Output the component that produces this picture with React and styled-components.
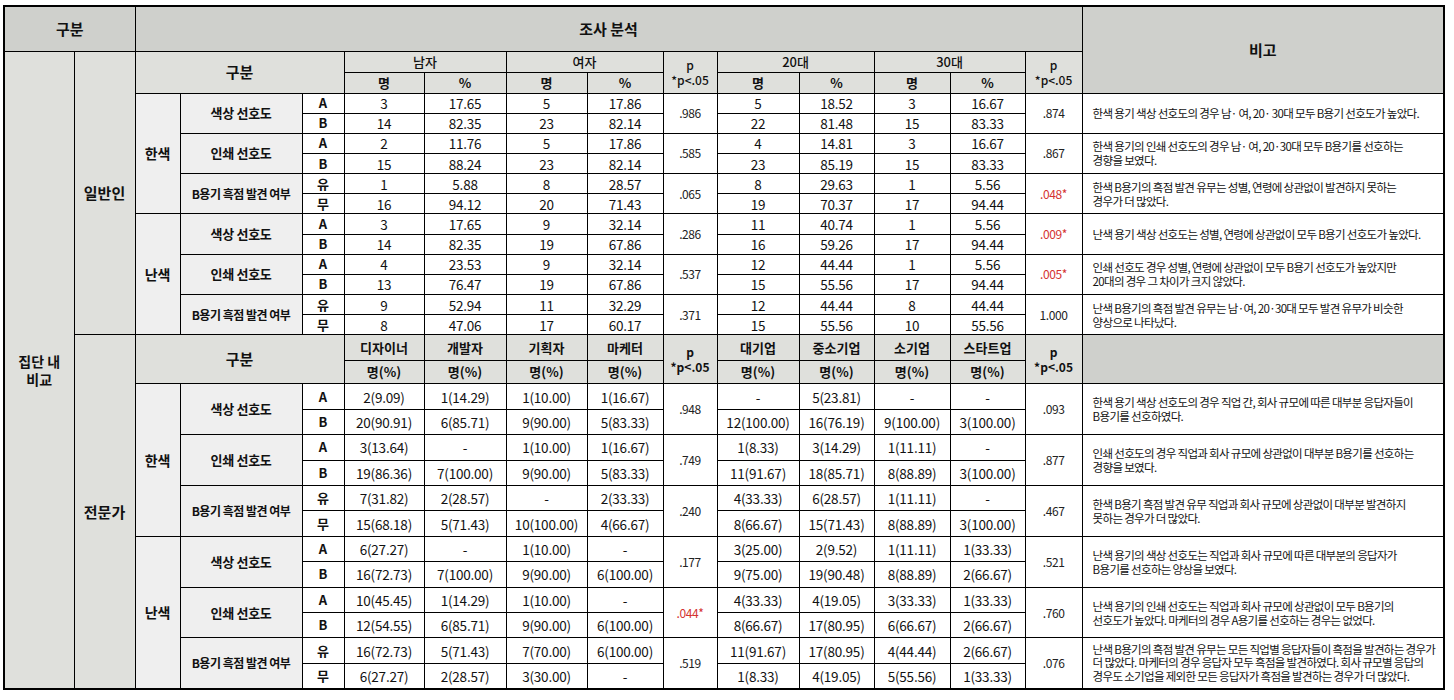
import React from "react";
import styled, { createGlobalStyle } from "styled-components";

const GlobalStyle = createGlobalStyle`
  html, body { margin: 0; padding: 0; background: #ffffff; }
  body { font-family: "Noto Sans CJK KR", "Noto Sans", sans-serif; color: #111; }
`;

const Page = styled.div`
  padding: 5px 0 0 3px;
`;

const Table = styled.table`
  border-collapse: collapse;
  table-layout: fixed;
  width: 1440px;
  border: 2px solid #000;
  font-family: "Noto Sans CJK KR", "Noto Sans", sans-serif;
`;

const baseCell = `
  border: 1px solid #000;
  padding: 0;
  text-align: center;
  vertical-align: middle;
  overflow: hidden;
  white-space: nowrap;
  color: #111;
  line-height: 16px;
`;

const HeadCell = styled.td`
  ${baseCell}
  background: #cfd0cc;
  font-weight: 700;
  font-size: 15px;
`;

const SubHead = styled.td`
  ${baseCell}
  background: #dfe0dc;
  font-weight: ${(p) => (p.$light ? 500 : 700)};
  font-size: ${(p) => p.$size || 13}px;
  line-height: ${(p) => p.$lh || "16px"};
`;

const SideCell = styled.td`
  ${baseCell}
  background: #dfe0dc;
  font-weight: 700;
  font-size: ${(p) => p.$size || 14}px;
  line-height: 18px;
`;

const GroupCell = styled.td`
  ${baseCell}
  background: #efefef;
  font-weight: 700;
  font-size: 14px;
`;

const LabelCell = styled.td`
  ${baseCell}
  background: #efefef;
  font-weight: 700;
  font-size: ${(p) => (p.$long ? 12 : 13)}px;
  letter-spacing: ${(p) => (p.$long ? "-0.5px" : "-0.3px")};
`;

const KeyCell = styled.td`
  ${baseCell}
  background: #fff;
  font-weight: 700;
  font-size: 13px;
`;

const DataCell = styled.td`
  ${baseCell}
  background: #fff;
  font-size: 13.5px;
  font-weight: 400;
  letter-spacing: -0.2px;
`;

const PCell = styled.td`
  ${baseCell}
  background: #fff;
  font-size: 12px;
  letter-spacing: -0.4px;
  color: ${(p) => (p.$sig ? "#d4322f" : "#222")};
`;

const NoteCell = styled.td`
  ${baseCell}
  background: #fff;
  text-align: left;
  padding: 0 6px 0 10px;
  font-size: 11.5px;
  line-height: ${(p) => (p.$tight ? 13.5 : 14)}px;
  letter-spacing: -0.68px;
`;

const HeadRow = styled.tr`
  height: ${(p) => p.$h}px;
`;

const DataRow = styled.tr`
  height: ${(p) => p.$h}px;
`;

const colWidths = [70, 61, 45, 122, 42, 80, 82, 81, 76, 54, 82, 75, 76, 75, 57, 362];

const general = [
  {
    group: "한색",
    items: [
      {
        label: "색상 선호도",
        keys: ["A", "B"],
        rows: [
          ["3", "17.65", "5", "17.86", "5", "18.52", "3", "16.67"],
          ["14", "82.35", "23", "82.14", "22", "81.48", "15", "83.33"],
        ],
        p1: ".986",
        p2: ".874",
        note: ["한색 용기 색상 선호도의 경우 남· 여, 20· 30대 모두 B용기 선호도가 높았다."],
      },
      {
        label: "인쇄 선호도",
        keys: ["A", "B"],
        rows: [
          ["2", "11.76", "5", "17.86", "4", "14.81", "3", "16.67"],
          ["15", "88.24", "23", "82.14", "23", "85.19", "15", "83.33"],
        ],
        p1: ".585",
        p2: ".867",
        note: ["한색 용기의 인쇄 선호도의 경우 남· 여, 20·30대 모두 B용기를 선호하는", "경향을 보였다."],
      },
      {
        label: "B용기 흑점 발견 여부",
        long: true,
        keys: ["유", "무"],
        rows: [
          ["1", "5.88", "8", "28.57", "8", "29.63", "1", "5.56"],
          ["16", "94.12", "20", "71.43", "19", "70.37", "17", "94.44"],
        ],
        p1: ".065",
        p2: ".048*",
        p2Sig: true,
        note: ["한색 B용기의 흑점 발견 유무는 성별, 연령에 상관없이 발견하지 못하는", "경우가 더 많았다."],
      },
    ],
  },
  {
    group: "난색",
    items: [
      {
        label: "색상 선호도",
        keys: ["A", "B"],
        rows: [
          ["3", "17.65", "9", "32.14", "11", "40.74", "1", "5.56"],
          ["14", "82.35", "19", "67.86", "16", "59.26", "17", "94.44"],
        ],
        p1: ".286",
        p2: ".009*",
        p2Sig: true,
        note: ["난색 용기 색상 선호도는 성별, 연령에 상관없이 모두 B용기 선호도가 높았다."],
      },
      {
        label: "인쇄 선호도",
        keys: ["A", "B"],
        rows: [
          ["4", "23.53", "9", "32.14", "12", "44.44", "1", "5.56"],
          ["13", "76.47", "19", "67.86", "15", "55.56", "17", "94.44"],
        ],
        p1: ".537",
        p2: ".005*",
        p2Sig: true,
        note: ["인쇄 선호도 경우 성별, 연령에 상관없이 모두 B용기 선호도가 높았지만", "20대의 경우 그 차이가 크지 않았다."],
      },
      {
        label: "B용기 흑점 발견 여부",
        long: true,
        keys: ["유", "무"],
        rows: [
          ["9", "52.94", "11", "32.29", "12", "44.44", "8", "44.44"],
          ["8", "47.06", "17", "60.17", "15", "55.56", "10", "55.56"],
        ],
        p1: ".371",
        p2: "1.000",
        note: ["난색 B용기의 흑점 발견 유무는 남·여, 20·30대 모두 발견 유무가 비슷한", "양상으로 나타났다."],
      },
    ],
  },
];

const expert = [
  {
    group: "한색",
    items: [
      {
        label: "색상 선호도",
        keys: ["A", "B"],
        rows: [
          ["2(9.09)", "1(14.29)", "1(10.00)", "1(16.67)", "-", "5(23.81)", "-", "-"],
          ["20(90.91)", "6(85.71)", "9(90.00)", "5(83.33)", "12(100.00)", "16(76.19)", "9(100.00)", "3(100.00)"],
        ],
        p1: ".948",
        p2: ".093",
        note: ["한색 용기 색상 선호도의 경우 직업 간, 회사 규모에 따른 대부분 응답자들이", "B용기를 선호하였다."],
      },
      {
        label: "인쇄 선호도",
        keys: ["A", "B"],
        rows: [
          ["3(13.64)", "-", "1(10.00)", "1(16.67)", "1(8.33)", "3(14.29)", "1(11.11)", "-"],
          ["19(86.36)", "7(100.00)", "9(90.00)", "5(83.33)", "11(91.67)", "18(85.71)", "8(88.89)", "3(100.00)"],
        ],
        p1: ".749",
        p2: ".877",
        note: ["인쇄 선호도의 경우 직업과 회사 규모에 상관없이 대부분 B용기를 선호하는", "경향을 보였다."],
      },
      {
        label: "B용기 흑점 발견 여부",
        long: true,
        keys: ["유", "무"],
        rows: [
          ["7(31.82)", "2(28.57)", "-", "2(33.33)", "4(33.33)", "6(28.57)", "1(11.11)", "-"],
          ["15(68.18)", "5(71.43)", "10(100.00)", "4(66.67)", "8(66.67)", "15(71.43)", "8(88.89)", "3(100.00)"],
        ],
        p1: ".240",
        p2: ".467",
        note: ["한색 B용기 흑점 발견 유무 직업과 회사 규모에 상관없이 대부분 발견하지", "못하는 경우가 더 많았다."],
      },
    ],
  },
  {
    group: "난색",
    items: [
      {
        label: "색상 선호도",
        keys: ["A", "B"],
        rows: [
          ["6(27.27)", "-", "1(10.00)", "-", "3(25.00)", "2(9.52)", "1(11.11)", "1(33.33)"],
          ["16(72.73)", "7(100.00)", "9(90.00)", "6(100.00)", "9(75.00)", "19(90.48)", "8(88.89)", "2(66.67)"],
        ],
        p1: ".177",
        p2: ".521",
        note: ["난색 용기의 색상 선호도는 직업과 회사 규모에 따른 대부분의 응답자가", "B용기를 선호하는 양상을 보였다."],
      },
      {
        label: "인쇄 선호도",
        keys: ["A", "B"],
        rows: [
          ["10(45.45)", "1(14.29)", "1(10.00)", "-", "4(33.33)", "4(19.05)", "3(33.33)", "1(33.33)"],
          ["12(54.55)", "6(85.71)", "9(90.00)", "6(100.00)", "8(66.67)", "17(80.95)", "6(66.67)", "2(66.67)"],
        ],
        p1: ".044*",
        p1Sig: true,
        p2: ".760",
        note: ["난색 용기의 인쇄 선호도는 직업과 회사 규모에 상관없이 모두 B용기의", "선호도가 높았다. 마케터의 경우 A용기를 선호하는 경우는 없었다."],
      },
      {
        label: "B용기 흑점 발견 여부",
        long: true,
        keys: ["유", "무"],
        rows: [
          ["16(72.73)", "5(71.43)", "7(70.00)", "6(100.00)", "11(91.67)", "17(80.95)", "4(44.44)", "2(66.67)"],
          ["6(27.27)", "2(28.57)", "3(30.00)", "-", "1(8.33)", "4(19.05)", "5(55.56)", "1(33.33)"],
        ],
        p1: ".519",
        p2: ".076",
        note: [
          "난색 B용기의 흑점 발견 유무는 모든 직업별 응답자들이 흑점을 발견하는 경우가",
          "더 많았다. 마케터의 경우 응답자 모두 흑점을 발견하였다. 회사 규모별 응답의",
          "경우도 소기업을 제외한 모든 응답자가 흑점을 발견하는 경우가 더 많았다.",
        ],
      },
    ],
  },
];

const PLabel = () => (
  <>
    p
    <br />
    *p&lt;.05
  </>
);

function renderSection(groups, rowH, keyPrefix) {
  const out = [];
  groups.forEach((g, gi) => {
    g.items.forEach((it, ii) => {
      it.rows.forEach((r, ri) => {
        const first = ii === 0 && ri === 0;
        out.push(
          <DataRow key={`${keyPrefix}-${gi}-${ii}-${ri}`} $h={rowH}>
            {first && <GroupCell rowSpan={6}>{g.group}</GroupCell>}
            {ri === 0 && (
              <LabelCell rowSpan={2} $long={it.long}>
                {it.label}
              </LabelCell>
            )}
            <KeyCell>{it.keys[ri]}</KeyCell>
            <DataCell>{r[0]}</DataCell>
            <DataCell>{r[1]}</DataCell>
            <DataCell>{r[2]}</DataCell>
            <DataCell>{r[3]}</DataCell>
            {ri === 0 && (
              <PCell rowSpan={2} $sig={it.p1Sig}>
                {it.p1}
              </PCell>
            )}
            <DataCell>{r[4]}</DataCell>
            <DataCell>{r[5]}</DataCell>
            <DataCell>{r[6]}</DataCell>
            <DataCell>{r[7]}</DataCell>
            {ri === 0 && (
              <PCell rowSpan={2} $sig={it.p2Sig}>
                {it.p2}
              </PCell>
            )}
            {ri === 0 && (
              <NoteCell rowSpan={2} $tight={it.note.length > 2}>
                {it.note.map((line, li) => (
                  <React.Fragment key={li}>
                    {li > 0 && <br />}
                    {line}
                  </React.Fragment>
                ))}
              </NoteCell>
            )}
          </DataRow>
        );
      });
    });
  });
  return out;
}

export default function App() {
  const jobs = ["디자이너", "개발자", "기획자", "마케터"];
  const sizes = ["대기업", "중소기업", "소기업", "스타트업"];
  return (
    <Page>
      <GlobalStyle />
      <Table>
        <colgroup>
          {colWidths.map((w, i) => (
            <col key={i} style={{ width: `${w}px` }} />
          ))}
        </colgroup>
        <tbody>
          <HeadRow $h={45}>
            <HeadCell colSpan={2}>구분</HeadCell>
            <HeadCell colSpan={13}>조사 분석</HeadCell>
            <HeadCell rowSpan={3}>비고</HeadCell>
          </HeadRow>
          <HeadRow $h={21}>
            <SideCell rowSpan={28}>
              집단 내
              <br />
              비교
            </SideCell>
            <SideCell rowSpan={14} $size={15}>
              일반인
            </SideCell>
            <SubHead colSpan={3} rowSpan={2} $size={15}>
              구분
            </SubHead>
            <SubHead colSpan={2} $light>남자</SubHead>
            <SubHead colSpan={2} $light>여자</SubHead>
            <SubHead rowSpan={2} $size={12} $lh="15px" $light>
              <PLabel />
            </SubHead>
            <SubHead colSpan={2} $light>20대</SubHead>
            <SubHead colSpan={2} $light>30대</SubHead>
            <SubHead rowSpan={2} $size={12} $lh="15px" $light>
              <PLabel />
            </SubHead>
          </HeadRow>
          <HeadRow $h={21}>
            {["명", "%", "명", "%", "명", "%", "명", "%"].map((t, i) => (
              <SubHead key={i}>{t}</SubHead>
            ))}
          </HeadRow>
          {renderSection(general, 20.17, "g")}
          <HeadRow $h={26}>
            <SideCell rowSpan={14} $size={15}>
              전문가
            </SideCell>
            <SubHead colSpan={3} rowSpan={2} $size={15}>
              구분
            </SubHead>
            {jobs.map((t) => (
              <SubHead key={t}>{t}</SubHead>
            ))}
            <SubHead rowSpan={2} $size={12} $lh="15px">
              <PLabel />
            </SubHead>
            {sizes.map((t) => (
              <SubHead key={t}>{t}</SubHead>
            ))}
            <SubHead rowSpan={2} $size={12} $lh="15px">
              <PLabel />
            </SubHead>
            <HeadCell rowSpan={2} />
          </HeadRow>
          <HeadRow $h={23}>
            {Array.from({ length: 8 }).map((_, i) => (
              <SubHead key={i}>명(%)</SubHead>
            ))}
          </HeadRow>
          {renderSection(expert, 25.42, "e")}
        </tbody>
      </Table>
    </Page>
  );
}
